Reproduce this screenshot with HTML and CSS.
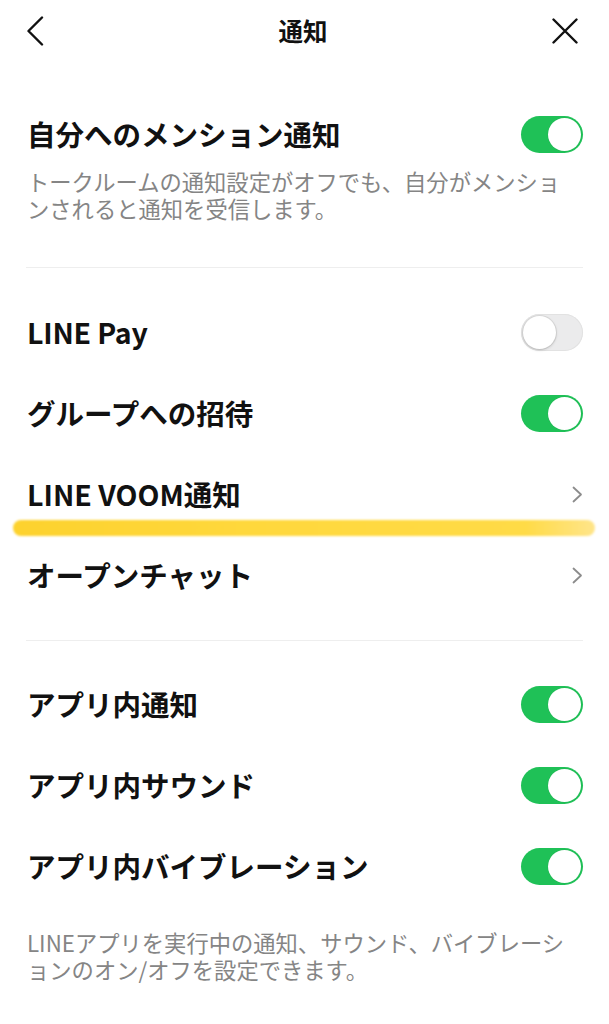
FILE: index.html
```html
<!DOCTYPE html>
<html lang="ja">
<head>
<meta charset="utf-8">
<title>通知</title>
<link rel="stylesheet" href="styles.css">
</head>
<body>
<div class="page">
  <header class="nav">
    <svg class="nav-back" width="18" height="30" viewBox="0 0 18 30"><path d="M16 1.5 L2.5 15 L16 28.5" fill="none" stroke="#111" stroke-width="2.4" stroke-linecap="round" stroke-linejoin="round"/></svg>
    <div class="nav-title">通知</div>
    <svg class="nav-close" width="26" height="26" viewBox="0 0 26 26"><path d="M1.5 1.5 L24.5 24.5 M24.5 1.5 L1.5 24.5" fill="none" stroke="#111" stroke-width="2.4" stroke-linecap="round"/></svg>
  </header>

  <section class="sec sec-first">
    <div class="row row-top">
      <span class="label">自分へのメンション通知</span>
      <span class="toggle on"><span class="knob"></span></span>
    </div>
    <p class="desc">トークルームの通知設定がオフでも、自分がメンショ<br>ンされると通知を受信します。</p>
  </section>

  <section class="sec sec-mid">
    <div class="row">
      <span class="label latin">LINE Pay</span>
      <span class="toggle off"><span class="knob"></span></span>
    </div>
    <div class="row">
      <span class="label">グループへの招待</span>
      <span class="toggle on"><span class="knob"></span></span>
    </div>
    <div class="row row-mark">
      <span class="label">LINE VOOM通知</span>
      <svg class="chev" width="11" height="17" viewBox="0 0 11 17"><path d="M1.5 1.5 L9 8.5 L1.5 15.5" fill="none" stroke="#8c8c8c" stroke-width="1.8" stroke-linecap="round" stroke-linejoin="round"/></svg>
      <span class="marker"></span>
    </div>
    <div class="row">
      <span class="label">オープンチャット</span>
      <svg class="chev" width="11" height="17" viewBox="0 0 11 17"><path d="M1.5 1.5 L9 8.5 L1.5 15.5" fill="none" stroke="#8c8c8c" stroke-width="1.8" stroke-linecap="round" stroke-linejoin="round"/></svg>
    </div>
  </section>

  <section class="sec sec-last">
    <div class="row">
      <span class="label">アプリ内通知</span>
      <span class="toggle on"><span class="knob"></span></span>
    </div>
    <div class="row">
      <span class="label">アプリ内サウンド</span>
      <span class="toggle on"><span class="knob"></span></span>
    </div>
    <div class="row">
      <span class="label">アプリ内バイブレーション</span>
      <span class="toggle on"><span class="knob"></span></span>
    </div>
    <p class="desc desc-foot">LINEアプリを実行中の通知、サウンド、バイブレーシ<br>ョンのオン/オフを設定できます。</p>
  </section>
</div>
</body>
</html>
```

FILE: styles.css
```css
* { box-sizing: border-box; }
html, body { margin: 0; padding: 0; background: #fff; }
body {
  font-family: "Noto Sans CJK JP", "Noto Sans", sans-serif;
  color: #111;
  width: 609px;
}
.page { width: 609px; }

.nav {
  height: 62px;
  display: flex;
  align-items: center;
  justify-content: space-between;
  padding: 0 31px 0 26px;
}
.nav-back { display: block; }
.nav-close { display: block; }
.nav-title {
  font-size: 24.5px;
  font-weight: 700;
  line-height: 1;
  margin-left: 10px;
}

.sec { padding: 0 26px 0 27px; position: relative; }
.sec-first { padding-top: 44px; padding-bottom: 46px; }
.sec-mid { padding-top: 24px; padding-bottom: 25px; }
.sec-last { padding-top: 23px; padding-bottom: 40px; }

.sec-first::after, .sec-mid::after {
  content: "";
  position: absolute;
  left: 26px;
  right: 26px;
  bottom: 0;
  height: 1px;
  background: #eeeeee;
}

.row {
  height: 81px;
  display: flex;
  align-items: center;
  justify-content: space-between;
  position: relative;
}
.row-top { height: 56px; }

.label {
  font-size: 28.5px;
  font-weight: 700;
  line-height: 1;
  color: #111;
}
.label.latin { letter-spacing: -0.2px; }

.toggle {
  width: 62px;
  height: 37px;
  border-radius: 19px;
  position: relative;
  display: block;
  flex: none;
}
.toggle.on { background: #1fc157; }
.toggle.off { background: #ebebec; box-shadow: inset 0 0 0 1px #e2e2e2; }
.knob {
  position: absolute;
  top: 2px;
  width: 33px;
  height: 33px;
  border-radius: 50%;
  background: #fff;
}
.toggle.on .knob { right: 2px; box-shadow: 0 0 0 0.5px rgba(0,0,0,0.06); }
.toggle.off .knob { left: 2px; box-shadow: 0 1px 3px rgba(0,0,0,0.18), 0 0 0 1px #dcdcdc; }

.chev { display: block; }

.marker {
  position: absolute;
  left: -14px;
  right: -12px;
  top: 66px;
  height: 16px;
  border-radius: 8px;
  background: linear-gradient(90deg, #fdd22e 0%, #ffd83c 40%, #ffdb47 88%, #ffe58a 100%);
  filter: blur(0.8px);
}

.desc {
  margin: 6px 0 0;
  font-size: 22.3px;
  line-height: 27px;
  color: #858585;
  font-weight: 400;
  white-space: nowrap;
}
.desc-foot { margin-top: 22px; }
```
